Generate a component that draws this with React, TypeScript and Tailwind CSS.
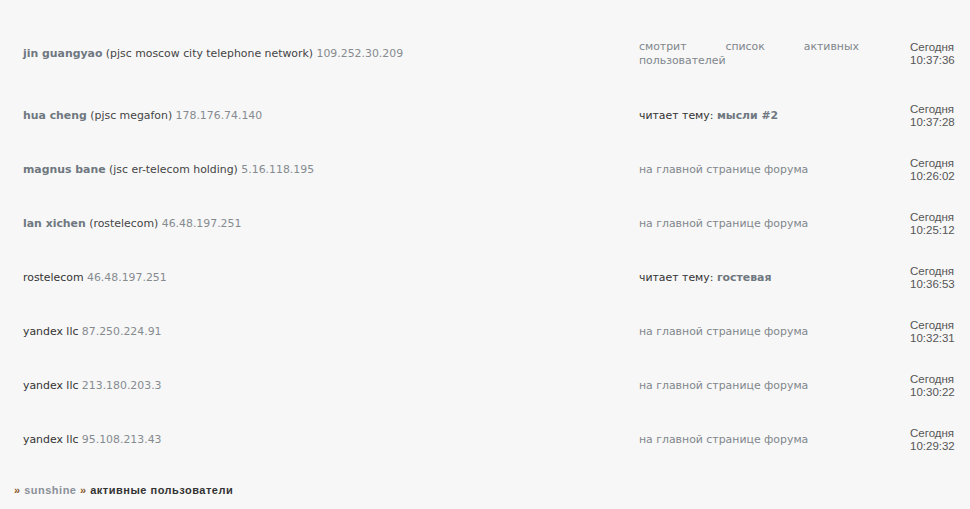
import React from 'react';

type Row = {
    name?: string;
    provider: string;
    ip: string;
    action: React.ReactNode;
    time: string;
};

const topic = (title: string) => (
    <span className="text-[#333]">
        читает тему: <b className="font-bold text-[#6f7780]">{title}</b>
    </span>
);

const onMain = <span className="text-[#80868c]">на главной странице форума</span>;

const rows: Row[] = [
    {
        name: 'jin guangyao',
        provider: 'pjsc moscow city telephone network',
        ip: '109.252.30.209',
        action: <span className="block text-justify [text-align-last:left] text-[#80868c]">смотрит список активных пользователей</span>,
        time: '10:37:36',
    },
    { name: 'hua cheng', provider: 'pjsc megafon', ip: '178.176.74.140', action: topic('мысли #2'), time: '10:37:28' },
    { name: 'magnus bane', provider: 'jsc er-telecom holding', ip: '5.16.118.195', action: onMain, time: '10:26:02' },
    { name: 'lan xichen', provider: 'rostelecom', ip: '46.48.197.251', action: onMain, time: '10:25:12' },
    { provider: 'rostelecom', ip: '46.48.197.251', action: topic('гостевая'), time: '10:36:53' },
    { provider: 'yandex llc', ip: '87.250.224.91', action: onMain, time: '10:32:31' },
    { provider: 'yandex llc', ip: '213.180.203.3', action: onMain, time: '10:30:22' },
    { provider: 'yandex llc', ip: '95.108.213.43', action: onMain, time: '10:29:32' },
];

export default function App() {
    return (
        <div className="min-h-[509px] w-[970px] bg-[#f7f7f7] font-['DejaVu_Sans',Verdana,sans-serif] text-[10.9px] leading-[14px] text-[#333]">
            <div className="px-[23px] pt-[27px]">
                {rows.map((r, i) => (
                    <div
                        key={i}
                        className={`grid h-[54px] grid-cols-[616px_220px_1fr] items-center ${i === 0 ? 'mb-[8px]' : ''}`}
                    >
                        <div>
                            {r.name ? (
                                <>
                                    <b className="font-bold text-[#6f7780]">{r.name}</b>{' '}
                                    <span className="text-[#444]">({r.provider})</span>
                                </>
                            ) : (
                                <span className="text-[#333]">{r.provider}</span>
                            )}{' '}
                            <span className="text-[#868b90]">{r.ip}</span>
                        </div>
                        <div>{r.action}</div>
                        <div className="pl-[51px] font-['Liberation_Sans',Arial,sans-serif] text-[11.5px] leading-[13px] text-[#555]">
                            Сегодня
                            <br />
                            {r.time}
                        </div>
                    </div>
                ))}
            </div>
            <div className="px-[14px] pt-[16px] font-['Liberation_Sans',Arial,sans-serif] text-[11px] font-bold tracking-[0.5px]">
                <span className="text-[#8a5a2a]">»</span>{' '}
                <span className="text-[#8a9099]">sunshine</span>{' '}
                <span className="text-[#8a5a2a]">»</span>{' '}
                <span className="text-[#333]">активные пользователи</span>
            </div>
        </div>
    );
}
